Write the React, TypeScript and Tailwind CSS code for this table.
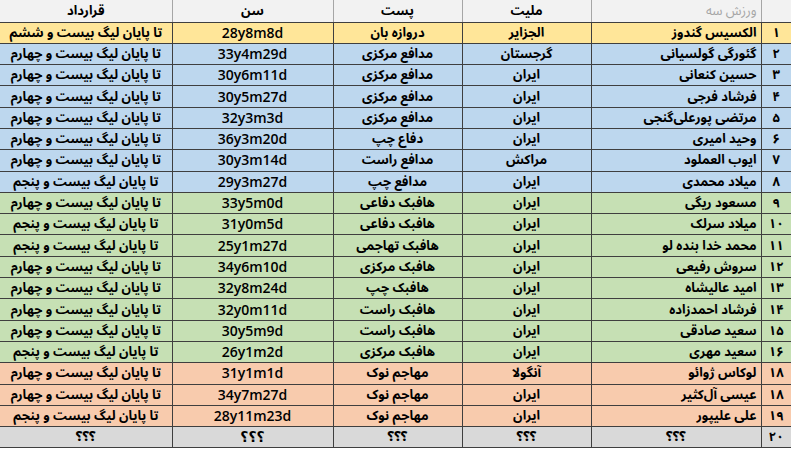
import React from "react";

type Row = {
  n: string;
  name: string;
  nat: string;
  pos: string;
  age: string;
  contract: string;
  bg: string;
};

const C4 = "تا پایان لیگ بیست و چهارم";
const C5 = "تا پایان لیگ بیست و پنجم";
const C6 = "تا پایان لیگ بیست و ششم";

const YELLOW = "bg-[#ffe699]";
const BLUE = "bg-[#bdd7ee]";
const GREEN = "bg-[#c6e0b4]";
const ORANGE = "bg-[#f8cbad]";

const rows: Row[] = [
  { n: "۱", name: "الکسیس گندوز", nat: "الجزایر", pos: "دروازه بان", age: "28y8m8d", contract: C6, bg: YELLOW },
  { n: "۲", name: "گئورگی گولسیانی", nat: "گرجستان", pos: "مدافع مرکزی", age: "33y4m29d", contract: C4, bg: BLUE },
  { n: "۳", name: "حسین کنعانی", nat: "ایران", pos: "مدافع مرکزی", age: "30y6m11d", contract: C4, bg: BLUE },
  { n: "۴", name: "فرشاد فرجی", nat: "ایران", pos: "مدافع مرکزی", age: "30y5m27d", contract: C4, bg: BLUE },
  { n: "۵", name: "مرتضی پورعلی‌گنجی", nat: "ایران", pos: "مدافع مرکزی", age: "32y3m3d", contract: C4, bg: BLUE },
  { n: "۶", name: "وحید امیری", nat: "ایران", pos: "دفاع چپ", age: "36y3m20d", contract: C4, bg: BLUE },
  { n: "۷", name: "ایوب العملود", nat: "مراکش", pos: "مدافع راست", age: "30y3m14d", contract: C4, bg: BLUE },
  { n: "۸", name: "میلاد محمدی", nat: "ایران", pos: "مدافع چپ", age: "29y3m27d", contract: C5, bg: BLUE },
  { n: "۹", name: "مسعود ریگی", nat: "ایران", pos: "هافبک دفاعی", age: "33y5m0d", contract: C4, bg: GREEN },
  { n: "۱۰", name: "میلاد سرلک", nat: "ایران", pos: "هافبک دفاعی", age: "31y0m5d", contract: C5, bg: GREEN },
  { n: "۱۱", name: "محمد خدا بنده لو", nat: "ایران", pos: "هافبک تهاجمی", age: "25y1m27d", contract: C5, bg: GREEN },
  { n: "۱۲", name: "سروش رفیعی", nat: "ایران", pos: "هافبک مرکزی", age: "34y6m10d", contract: C4, bg: GREEN },
  { n: "۱۳", name: "امید عالیشاه", nat: "ایران", pos: "هافبک چپ", age: "32y8m24d", contract: C4, bg: GREEN },
  { n: "۱۴", name: "فرشاد احمدزاده", nat: "ایران", pos: "هافبک راست", age: "32y0m11d", contract: C4, bg: GREEN },
  { n: "۱۵", name: "سعید صادقی", nat: "ایران", pos: "هافبک راست", age: "30y5m9d", contract: C4, bg: GREEN },
  { n: "۱۶", name: "سعید مهری", nat: "ایران", pos: "هافبک مرکزی", age: "26y1m2d", contract: C5, bg: GREEN },
  { n: "۱۸", name: "لوکاس ژوائو", nat: "آنگولا", pos: "مهاجم نوک", age: "31y1m1d", contract: C4, bg: ORANGE },
  { n: "۱۸", name: "عیسی آل‌کثیر", nat: "ایران", pos: "مهاجم نوک", age: "34y7m27d", contract: C4, bg: ORANGE },
  { n: "۱۹", name: "علی علیپور", nat: "ایران", pos: "مهاجم نوک", age: "28y11m23d", contract: C5, bg: ORANGE },
  { n: "۲۰", name: "؟؟؟", nat: "؟؟؟", pos: "؟؟؟", age: "؟؟؟", contract: "؟؟؟", bg: "bg-[#d9d9d9]" },
];

// excel-ish cells: persian text in DejaVu bold, ages in a latin face
const fa = "font-['Noto_Sans_Arabic','DejaVu_Sans',sans-serif] font-bold text-[13px] whitespace-nowrap";
const cell = "border border-[#3f3f3f] p-0 leading-[18px]";
const head = "border-x border-[#a6a6a6] border-b border-b-[#3f3f3f] p-0 leading-[18px]";

export default function App() {
  return (
    <div className="w-[791px] h-[450px] overflow-hidden bg-white">
      <table dir="rtl" className="w-[791px] table-fixed border-collapse text-black">
        <colgroup>
          <col className="w-[30px]" />
          <col className="w-[170px]" />
          <col className="w-[129px]" />
          <col className="w-[129px]" />
          <col className="w-[161px]" />
          <col className="w-[172px]" />
        </colgroup>
        <thead>
          <tr className="h-[22px] bg-[#f2f2f2]">
            <th className={`${head} border-r-0`} />
            <th className={`${head} pr-1 text-right align-top pt-[2px] font-['Noto_Sans_Arabic','DejaVu_Sans',sans-serif] text-[13px] font-normal text-[#a6a6a6]`}>
              ورزش سه
            </th>
            <th className={`${head} text-center ${fa}`}>ملیت</th>
            <th className={`${head} text-center ${fa}`}>پست</th>
            <th className={`${head} text-center ${fa}`}>سن</th>
            <th className={`${head} border-l-0 text-center ${fa}`}>قرارداد</th>
          </tr>
        </thead>
        <tbody>
          {rows.map((r, i) => (
            <tr key={i} className={`h-[21.3px] ${r.bg}`}>
              <td className={`${cell} border-r-0 text-center ${fa}`}>{r.n}</td>
              <td className={`${cell} ${r.name === "؟؟؟" ? "text-center" : "text-right pr-1"} ${fa}`}>{r.name}</td>
              <td className={`${cell} text-center ${fa}`}>{r.nat}</td>
              <td className={`${cell} text-center ${fa}`}>{r.pos}</td>
              <td className={`${cell} text-center whitespace-nowrap font-['Open_Sans','DejaVu_Sans',sans-serif] text-[14px] font-semibold`}>
                {r.age}
              </td>
              <td className={`${cell} border-l-0 text-center ${fa} text-[12px]`}>{r.contract}</td>
            </tr>
          ))}
        </tbody>
      </table>
    </div>
  );
}
